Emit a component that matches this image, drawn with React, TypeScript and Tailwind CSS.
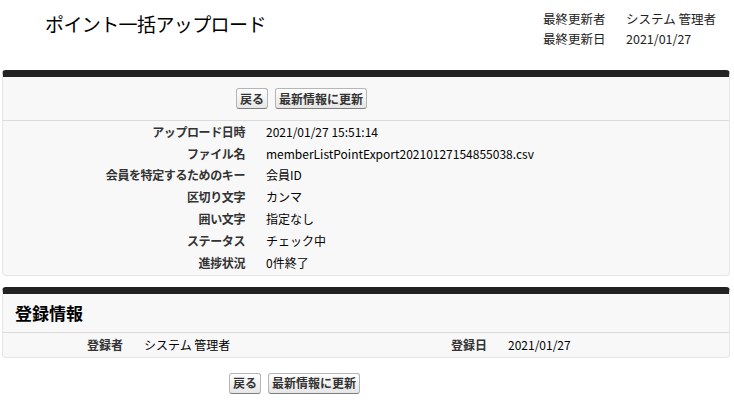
const jp = "font-['Noto_Sans_CJK_JP','Noto_Sans_CJK_JP',sans-serif]";

const rows: [string, string][] = [
  ["アップロード日時", "2021/01/27 15:51:14"],
  ["ファイル名", "memberListPointExport20210127154855038.csv"],
  ["会員を特定するためのキー", "会員ID"],
  ["区切り文字", "カンマ"],
  ["囲い文字", "指定なし"],
  ["ステータス", "チェック中"],
  ["進捗状況", "0件終了"],
];

function Btn({ children }: { children: React.ReactNode }) {
  return (
    <button className="h-[21px] px-[3px] rounded-[3px] border border-[#b5b5b5] border-b-[#7f7f7f] bg-gradient-to-b from-white to-[#e6e6e6] text-[12px] leading-none font-bold text-[#333]">
      {children}
    </button>
  );
}

function Buttons() {
  return (
    <div className="flex gap-[7px]">
      <Btn>戻る</Btn>
      <Btn>最新情報に更新</Btn>
    </div>
  );
}

export default function App() {
  return (
    <div className={`w-[734px] h-[402px] bg-white text-black pl-[2px] pr-[4px] ${jp}`}>
      {/* header */}
      <div className="h-[70px] flex">
        <h1 className="pl-[43px] pt-[10px] text-[19px] leading-[28px] font-normal tracking-[-0.6px] w-[541px]">
          ポイント一括アップロード
        </h1>
        <div className="pt-[9px] text-[12.5px] leading-[20px] text-[#222]">
          <div className="flex">
            <span className="w-[83px]">最終更新者</span>
            <span>システム 管理者</span>
          </div>
          <div className="flex">
            <span className="w-[83px]">最終更新日</span>
            <span>2021/01/27</span>
          </div>
        </div>
      </div>

      {/* detail panel */}
      <div className="rounded-[4px] border border-[#e6e6e6] border-t-[7px] border-t-[#222] bg-[#f8f8f8]">
        <div className="h-[44px] flex items-center pl-[233px] border-b border-[#dbdbdb]">
          <Buttons />
        </div>
        <div className="pb-[1px]">
          {rows.map(([label, value]) => (
            <div key={label} className="h-[21.8px] flex items-center text-[12px]">
              <div className="w-[242px] text-right font-bold text-[#333] tracking-[-0.4px]">{label}</div>
              <div className="pl-[21px] text-black">{value}</div>
            </div>
          ))}
        </div>
      </div>

      {/* registration panel */}
      <div className="mt-[11px] rounded-[4px] border border-[#e6e6e6] border-t-[7px] border-t-[#222] bg-[#f8f8f8]">
        <div className="h-[39px] flex items-center pl-[12px] border-b border-[#dbdbdb]">
          <h2 className="text-[17px] font-bold text-black">登録情報</h2>
        </div>
        <div className="h-[24px] flex items-center text-[12px]">
          <div className="w-[120px] text-right font-bold text-[#333]">登録者</div>
          <div className="w-[244px] pl-[21px]">システム 管理者</div>
          <div className="w-[120px] text-right font-bold text-[#333]">登録日</div>
          <div className="pl-[21px]">2021/01/27</div>
        </div>
      </div>

      <div className="mt-[15px] pl-[227px]">
        <Buttons />
      </div>
    </div>
  );
}
